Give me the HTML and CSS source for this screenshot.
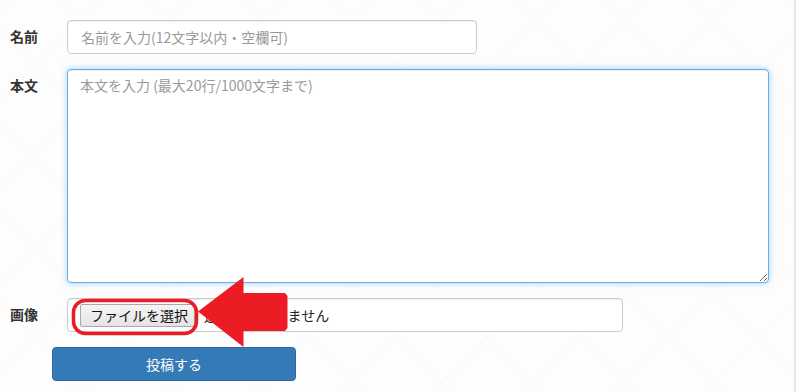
FILE: index.html
```html
<!DOCTYPE html>
<html lang="ja">
<head>
<meta charset="utf-8">
<link rel="stylesheet" href="styles.css">
</head>
<body>
<div class="page">
  <form class="post-form">
    <div class="row row-name">
      <label class="label">名前</label>
      <input class="field field-name" type="text" placeholder="名前を入力(12文字以内・空欄可)">
    </div>
    <div class="row row-body">
      <label class="label">本文</label>
      <textarea class="field field-body" placeholder="本文を入力 (最大20行/1000文字まで)"></textarea>
    </div>
    <div class="row row-image">
      <label class="label">画像</label>
      <div class="field field-file">
        <span class="file-btn">ファイルを選択</span>
        <span class="file-text">選択されていません</span>
      </div>
    </div>
    <div class="submit-row">
      <span class="submit-btn">投稿する</span>
    </div>
  </form>
  <svg class="annotation" width="796" height="392" viewBox="0 0 796 392" xmlns="http://www.w3.org/2000/svg">
    <rect x="73.5" y="300.5" width="123" height="33" rx="12" ry="12" fill="none" stroke="#ec1c24" stroke-width="3.5"/>
    <polygon points="198,311.5 243.5,277 243.5,293 285,293 287.5,296 287.5,328 285,331 243.5,331 243.5,347" fill="#ec1c24"/>
  </svg>
</div>
</body>
</html>
```

FILE: styles.css
```css
* { box-sizing: border-box; }

html, body {
  margin: 0;
  padding: 0;
}

body {
  width: 796px;
  height: 392px;
  overflow: hidden;
  font-family: "Noto Sans CJK JP", "Noto Sans", sans-serif;
  font-size: 14px;
  color: #333;
  background-color: #fcfcfc;
}

.page {
  position: relative;
  width: 796px;
  height: 392px;
  border-right: 2px solid #e6e6e6;
  background-color: #fdfdfd;
  background-image:
    repeating-linear-gradient(45deg, transparent 0, transparent 63px, rgba(0,0,0,0.012) 63px, rgba(0,0,0,0.012) 64px),
    repeating-linear-gradient(-45deg, transparent 0, transparent 63px, rgba(0,0,0,0.012) 63px, rgba(0,0,0,0.012) 64px);
}

.post-form {
  padding: 20px 0 0 10px;
  display: flex;
  flex-direction: column;
}

.row {
  display: flex;
  align-items: flex-start;
}

.row-name { margin-bottom: 15px; }
.row-body { margin-bottom: 15px; }
.row-image { margin-bottom: 15px; }

.label {
  width: 57px;
  flex: none;
  font-weight: bold;
  font-size: 14px;
  line-height: 20px;
  padding-top: 6px;
  color: #333;
}

.field {
  font-family: "Noto Sans CJK JP", "Noto Sans", sans-serif;
  font-size: 14px;
  color: #555;
  background: #fff;
  border: 1px solid #ccc;
  border-radius: 4px;
  box-shadow: inset 0 1px 1px rgba(0,0,0,0.075);
  margin: 0;
}

.field::placeholder { color: #999; }

.field-name {
  width: 410px;
  height: 34px;
  padding: 6px 13px;
  line-height: 20px;
}

.field-body {
  width: 702px;
  height: 214px;
  padding: 5px 12px;
  line-height: 20px;
  border-color: #66afe9;
  box-shadow: inset 0 1px 1px rgba(0,0,0,0.075), 0 0 6px rgba(102,175,233,0.6);
  resize: both;
  outline: none;
}

.field-file {
  width: 556px;
  height: 34px;
  padding: 0 0 0 12px;
  display: flex;
  align-items: center;
  gap: 9px;
}

.file-btn {
  height: 23px;
  padding: 0 6px 0 9px;
  display: flex;
  align-items: center;
  font-size: 14px;
  color: #111;
  background: linear-gradient(#f5f5f5, #e4e4e4);
  border: 1px solid #a9a9a9;
  border-radius: 2px;
  white-space: nowrap;
}

.file-text {
  font-size: 14px;
  color: #222;
  white-space: nowrap;
}

.submit-row {
  padding-left: 42px;
  display: flex;
}

.submit-btn {
  width: 244px;
  height: 34px;
  display: flex;
  align-items: center;
  justify-content: center;
  background: #337ab7;
  border: 1px solid #2e6da4;
  border-radius: 4px;
  color: #fff;
  font-size: 14px;
}

.annotation {
  position: absolute;
  left: 0;
  top: 0;
  pointer-events: none;
}
```
